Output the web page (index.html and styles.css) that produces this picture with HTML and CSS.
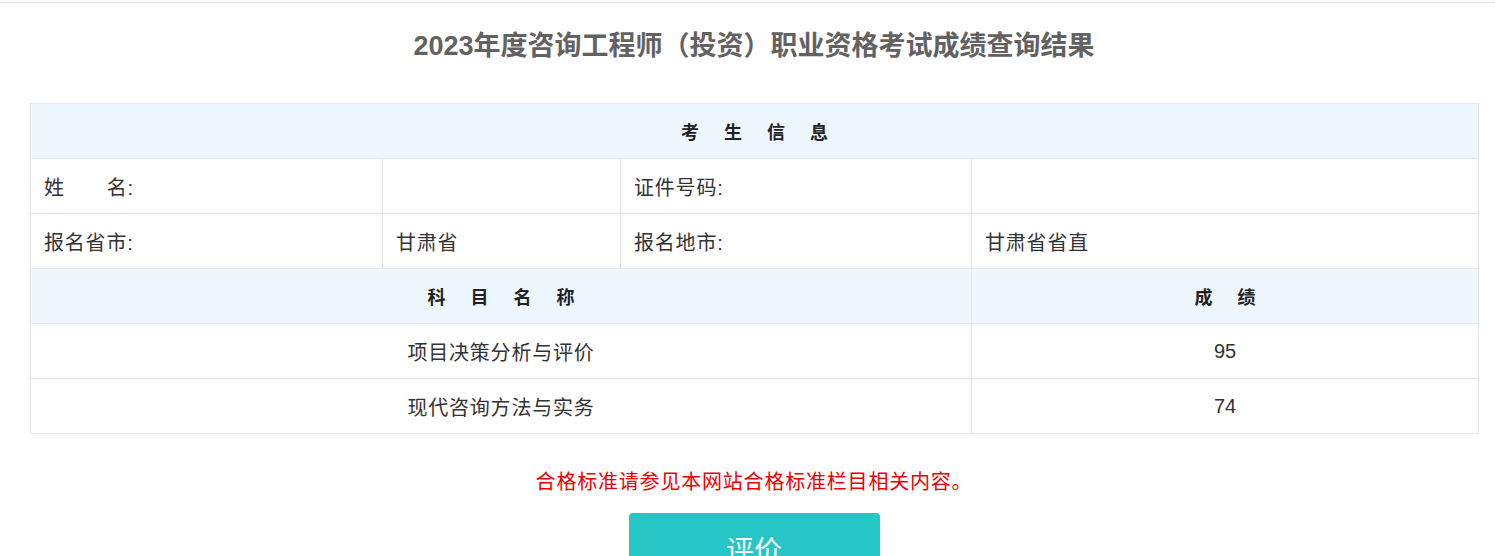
FILE: index.html
```html
<!DOCTYPE html>
<html lang="zh-CN">
<head>
<meta charset="utf-8">
<title>成绩查询结果</title>
<link rel="stylesheet" href="styles.css">
</head>
<body>
<div class="topline"></div>
<div class="page">
  <h1 class="title">2023年度咨询工程师（投资）职业资格考试成绩查询结果</h1>
  <table class="grid">
    <colgroup>
      <col class="c1"><col class="c2"><col class="c3"><col class="c4">
    </colgroup>
    <tr class="head"><th colspan="4"><span class="sp">考生信息</span></th></tr>
    <tr><td class="lbl">姓<span class="gap"></span>名:</td><td></td><td class="lbl">证件号码:</td><td></td></tr>
    <tr><td class="lbl">报名省市:</td><td>甘肃省</td><td class="lbl">报名地市:</td><td>甘肃省省直</td></tr>
    <tr class="head"><th colspan="3"><span class="sp">科目名称</span></th><th><span class="sp">成绩</span></th></tr>
    <tr><td colspan="3" class="ctr">项目决策分析与评价</td><td class="ctr num">95</td></tr>
    <tr><td colspan="3" class="ctr">现代咨询方法与实务</td><td class="ctr num">74</td></tr>
  </table>
  <p class="note">合格标准请参见本网站合格标准栏目相关内容。</p>
  <div class="actions"><button class="btn">评价</button></div>
</div>
</body>
</html>
```
FILE: styles.css
```css
html, body {
  margin: 0;
  padding: 0;
  background: #fff;
  font-family: "Liberation Sans", Arial, "Noto Sans CJK SC", sans-serif;
  color: #333;
}
.topline {
  margin-top: 2px;
  height: 1px;
  background: #e8e8e8;
}
.page {
  width: 1448px;
  margin-left: 30px;
}
.title {
  margin: 0;
  padding-top: 27px;
  height: 73px;
  box-sizing: border-box;
  font-size: 27px;
  line-height: 32px;
  font-weight: bold;
  color: #626262;
  text-align: center;
}
.grid {
  width: 1448px;
  margin-top: 27px;
  border-collapse: collapse;
  table-layout: fixed;
  font-size: 20px;
  letter-spacing: 0.8px;
}
.c1 { width: 352px; }
.c2 { width: 238px; }
.c3 { width: 351px; }
.c4 { width: 507px; }
.grid th, .grid td {
  border: 1px solid #e4e6e8;
  height: 55px;
  padding: 0 0 0 13px;
  box-sizing: border-box;
  text-align: left;
  font-weight: normal;
  color: #333;
}
.grid .head th {
  background: #eff7fe;
  text-align: center;
  font-weight: bold;
  font-size: 18px;
  letter-spacing: 0;
  padding: 0;
  color: #222;
}
.sp {
  letter-spacing: 25px;
  margin-right: -25px;
}
.gap {
  display: inline-block;
  width: 42px;
}
.grid td.ctr {
  text-align: center;
  padding: 0;
}
.grid td.num {
  letter-spacing: 0;
}
.note {
  margin: 34px 0 0;
  text-align: center;
  color: #ee0000;
  font-size: 20px;
  letter-spacing: 0.8px;
  line-height: 28px;
}
.actions {
  margin-top: 17px;
  display: flex;
  justify-content: center;
}
.btn {
  width: 251px;
  height: 64px;
  border: none;
  border-radius: 4px;
  background: #26c6c6;
  color: #fff;
  font-family: "Noto Sans CJK SC", sans-serif;
  font-size: 28px;
  padding-top: 8px;
}
```
